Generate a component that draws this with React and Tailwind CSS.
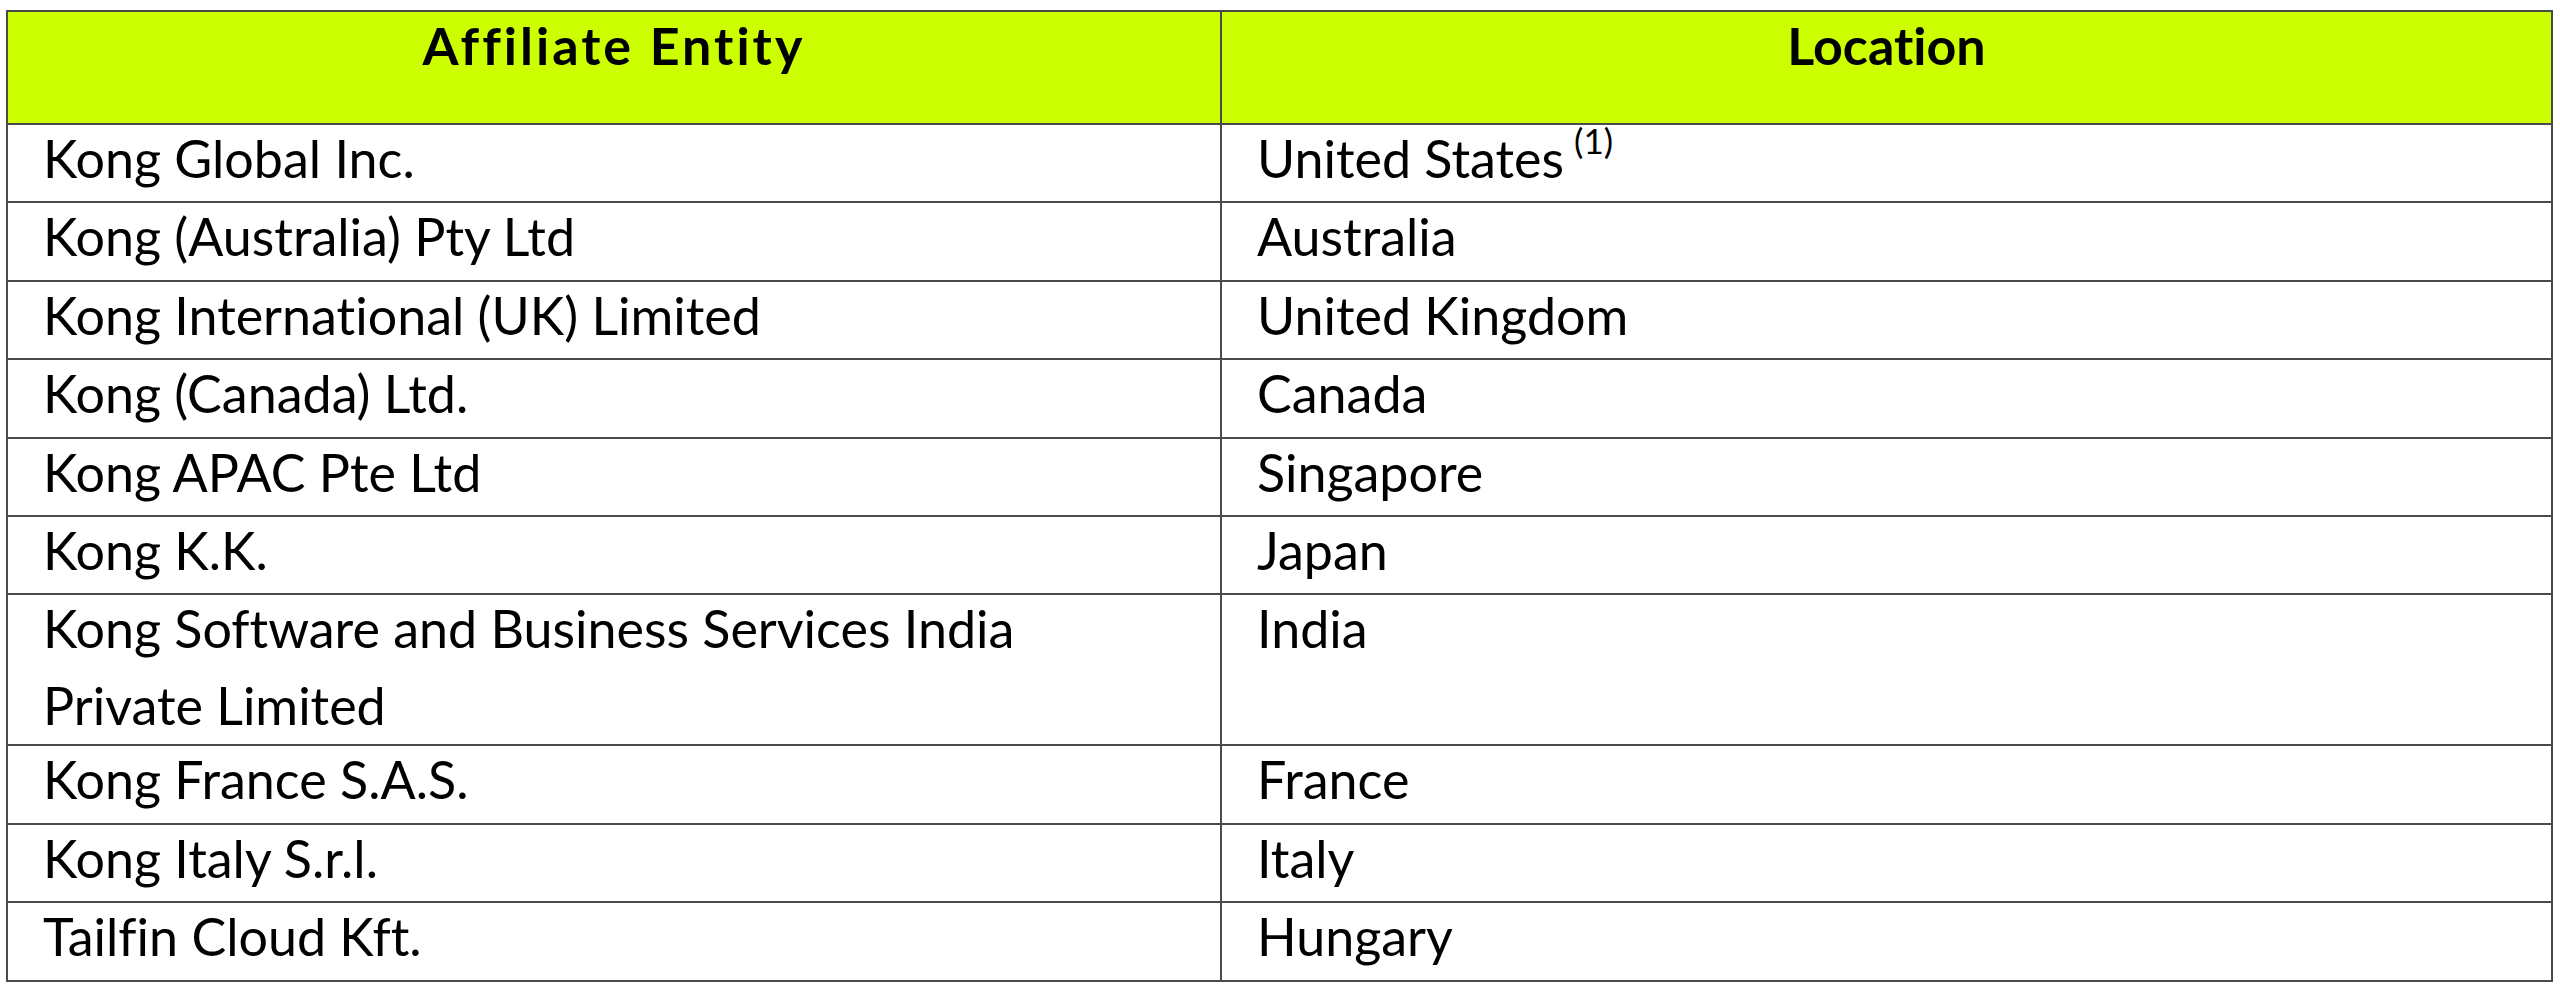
const rows = [
  ['Kong Global Inc.', 'United States', true],
  ['Kong (Australia) Pty Ltd', 'Australia'],
  ['Kong International (UK) Limited', 'United Kingdom'],
  ['Kong (Canada) Ltd.', 'Canada'],
  ['Kong APAC Pte Ltd', 'Singapore'],
  ['Kong K.K.', 'Japan'],
  ['Kong Software and Business Services India\nPrivate Limited', 'India'],
  ['Kong France S.A.S.', 'France'],
  ['Kong Italy S.r.l.', 'Italy'],
  ['Tailfin Cloud Kft.', 'Hungary'],
]

const cell = 'border-2 border-[#4a4a4a] px-[35px] align-top text-[52px] leading-[77px]'

export default function App() {
  return (
    <div className="min-h-screen bg-white pt-[10px] pl-[6px] font-['Lato',sans-serif] text-black [font-variant-ligatures:none]">
      <table className="w-[2547px] table-fixed border-collapse">
        <colgroup>
          <col className="w-[1214px]" />
          <col />
        </colgroup>
        <thead>
          <tr className="h-[113px] bg-[#ccff00]">
            <th className={`${cell} font-bold`}>
              <div className="-mt-[5px] tracking-[3px]">Affiliate Entity</div>
            </th>
            <th className={`${cell} font-bold`}>
              <div className="-mt-[5px]">Location</div>
            </th>
          </tr>
        </thead>
        <tbody>
          {rows.map(([entity, location, note]) => (
            <tr key={entity} className="h-[78.4px]">
              <td className={cell}>
                <div className="-mt-[5px] whitespace-pre-line">{entity}</div>
              </td>
              <td className={cell}>
                <div className="-mt-[5px]">
                  {location}
                  {note && <sup className="-top-[24px] ml-[10px] text-[35px]">(1)</sup>}
                </div>
              </td>
            </tr>
          ))}
        </tbody>
      </table>
    </div>
  )
}
